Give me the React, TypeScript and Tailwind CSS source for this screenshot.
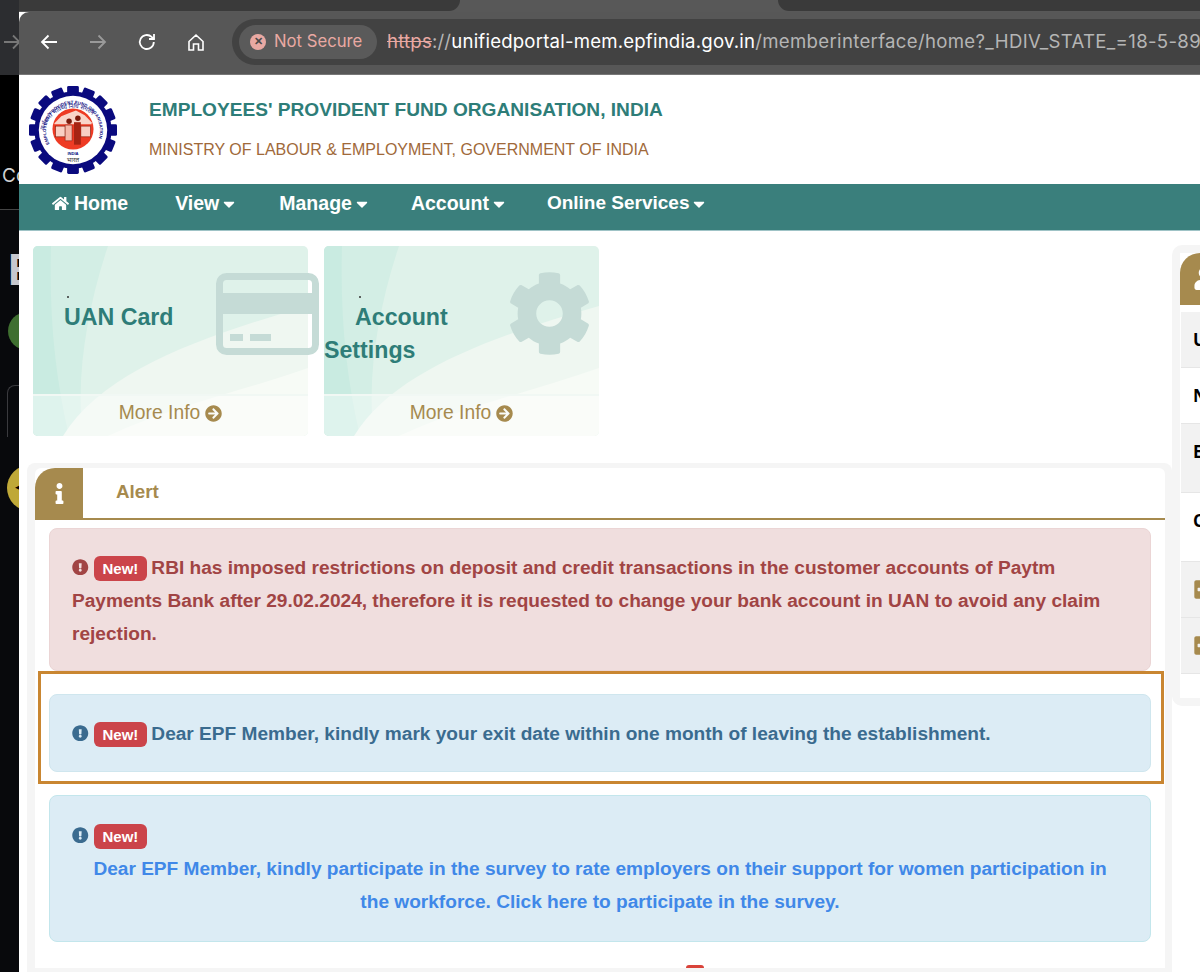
import React from "react";
import { FaHome, FaArrowCircleRight, FaCog, FaInfo, FaExclamationCircle, FaUser, FaMinusSquare, FaCaretDown } from "react-icons/fa";

const sans = "font-['Liberation_Sans',Arial,sans-serif]";

function Logo() {
  const teeth = Array.from({ length: 16 }, (_, i) => (i * 360) / 16);
  return (
    <svg width="88" height="88" viewBox="0 0 90 90" className="shrink-0">
      <defs>
        <path id="ringEn" d="M 21.5 60 A 27.5 27.5 0 1 1 68.5 60" fill="none" />
        <path id="ringHi" d="M 14.5 48 A 31 31 0 0 1 75.5 48" fill="none" />
      </defs>
      {teeth.map((a) => (
        <rect key={a} x="39" y="0" width="12" height="12" rx="1.5" fill="#0a0a7e" transform={`rotate(${a} 45 45)`} />
      ))}
      <circle cx="45" cy="45" r="39.5" fill="#0a0a7e" />
      <circle cx="45" cy="45" r="35" fill="#ffffff" />
      <circle cx="45" cy="44" r="21" fill="#ee3b24" />
      <path d="M26 38 L33 31 L40 28 L48 25 L57 30 L64 37 L64 39 L26 39 Z" fill="#f9d5c9" />
      <rect x="27" y="41" width="10" height="11" fill="#f9cfc3" stroke="#8a2010" strokeWidth="0.7" />
      <rect x="53" y="41" width="10" height="11" fill="#f9cfc3" stroke="#8a2010" strokeWidth="0.7" />
      <circle cx="41" cy="36" r="2.8" fill="#7a1a0c" />
      <circle cx="50" cy="33" r="2.8" fill="#7a1a0c" />
      <path d="M37 40 h7 v16 h-7 Z" fill="#f4b7a8" stroke="#7a1a10" strokeWidth="0.5" />
      <path d="M46 37 h7 v23 h-7 Z" fill="#a62413" />
      <text fontSize="4.4" fontWeight="700" fill="#0a0a7e" fontFamily="'Liberation Sans',sans-serif" letterSpacing="0.1">
        <textPath href="#ringEn" startOffset="1">EMPLOYEES' PROVIDENT FUND ORGANISATION</textPath>
      </text>
      <text fontSize="6" fill="#0a0a7e" fontFamily="'Noto Sans',sans-serif">
        <textPath href="#ringHi" startOffset="3">कर्मचारी भविष्य निधि संगठन</textPath>
      </text>
      <text x="45" y="71" textAnchor="middle" fontSize="4.2" fontWeight="700" fill="#0a0a7e" fontFamily="'Liberation Sans',sans-serif">INDIA</text>
      <text x="45" y="78" textAnchor="middle" fontSize="6.5" fill="#333" fontFamily="'Noto Sans',sans-serif">भारत</text>
    </svg>
  );
}

function CardIcon() {
  return (
    <svg width="103" height="82" viewBox="0 0 103 82" className="absolute left-[183px] top-[27px]">
      <rect x="3.5" y="3.5" width="96" height="75" rx="7" fill="none" stroke="#c5dbd6" strokeWidth="7" />
      <rect x="3" y="20" width="97" height="21" fill="#c5dbd6" />
      <rect x="14" y="61" width="13" height="7" fill="#c5dbd6" />
      <rect x="34" y="61" width="21" height="7" fill="#c5dbd6" />
    </svg>
  );
}

function Tile({ children, icon }: { children: React.ReactNode; icon: React.ReactNode }) {
  return (
    <div className="relative w-[275px] h-[190px] shrink-0">
      <div className="absolute inset-0 rounded-[5px] overflow-hidden bg-[#dff2ea] flex flex-col">
        <svg className="absolute inset-0 w-full h-full" viewBox="0 0 275 190" preserveAspectRatio="none">
          <path d="M0 0 H75 C55 60 42 130 50 190 H0 Z" fill="#d3eee5" />
          <path d="M0 0 H18 C16 70 22 130 36 190 H0 Z" fill="#c9ebe1" />
          <path d="M30 190 C70 125 170 90 275 60 V190 Z" fill="#eff7f1" />
          <path d="M75 190 C140 160 210 145 275 122 V190 Z" fill="#f7fbf6" />
        </svg>
        <div className="relative h-[150px] border-b-2 border-[#f1f8f4]" />
        <div className="relative flex-1 bg-[#ffffff66]" />
      </div>
      {icon}
      <div className="absolute left-0 right-0 top-0 h-[150px]">{children}</div>
      <div className={`absolute left-0 right-0 top-[150px] h-[38px] flex items-center justify-center gap-[5px] text-[#a68a4e] text-[19.3px] pb-[3px] ${sans}`}>
        More Info <FaArrowCircleRight className="text-[17px]" />
      </div>
    </div>
  );
}

function NewBadge() {
  return <span className={`inline-block align-[0px] bg-[#cb444a] text-white text-[15px] font-bold leading-[25px] h-[25px] px-[9px] rounded-[6px] ml-[5px] mr-[4px] ${sans}`}>New!</span>;
}

function Bang() {
  return <FaExclamationCircle className="inline-block text-[16.5px] align-[-1px]" />;
}

function Row({ label, bg, h, icon, tall }: { label?: string; bg: string; h: string; icon?: boolean; tall?: boolean }) {
  return (
    <div className={`${bg} ${h} ${tall ? "pb-[12px]" : ""} flex items-center pl-[12px] border-b border-[#e6e6e6] font-['Open_Sans',sans-serif] font-bold text-[17px] text-black`}>
      {icon ? <FaMinusSquare className="text-[#a68a4e] text-[21px]" /> : label}
    </div>
  );
}

export default function App() {
  return (
    <div className={`relative w-[1200px] h-[972px] overflow-hidden flex bg-[#08090c] ${sans}`}>
      {/* window behind */}
      <div className="w-[19px] shrink-0 flex flex-col text-[#d0d0d0]">
        <div className="h-[75px] bg-[#2c2d30] flex items-center pt-[8px] pl-[3px] overflow-hidden">
          <svg width="16" height="20" viewBox="0 0 16 20" fill="none" stroke="#777777" strokeWidth="1.8" className="shrink-0"><path d="M1 10h15M10 3.5 16.5 10 10 16.5" /></svg>
        </div>
        <div className="h-[135px] bg-black border-b border-[#444] flex items-end pb-[19px] pl-[2px] text-[19px] font-['Inter',sans-serif] whitespace-nowrap overflow-hidden">Co</div>
        <div className="pt-[38px] pl-[8px] text-[44px] leading-[44px] font-bold text-[#c8c8ce] overflow-hidden h-[102px]">E</div>
        <div className="ml-[8px] w-[38px] h-[38px] rounded-full bg-[#3f6f30] shrink-0" />
        <div className="ml-[7px] mt-[35px] h-[52px] rounded-tl-[8px] border-l border-t border-[#3a3a3e]" />
        <div className="ml-[7px] mt-[28px] w-[46px] h-[46px] rounded-full bg-[#bfa838] shrink-0 flex items-center pl-[8px] text-black text-[9px]">◀</div>
      </div>

      <div className="relative w-[1181px] shrink-0 flex flex-col bg-white overflow-hidden">
        {/* Tab strip */}
        <div className="h-[12px] bg-[#585858] flex justify-between shrink-0">
          <div className="w-[441px] h-[11px] bg-[#3a3a3a] rounded-br-[12px]" />
          <div className="w-[422px] h-[11px] bg-[#3a3a3a] rounded-bl-[12px]" />
        </div>
        {/* Toolbar */}
        <div className="h-[63px] bg-[#575757] border-b border-[#777] flex items-center pl-[20px] shrink-0 rounded-tl-[10px] relative">
          <svg width="20" height="20" viewBox="0 0 20 20" fill="none" stroke="#ffffff" strokeWidth="1.8" className="mt-[-3px]"><path d="M18 10H3M9.5 3.5 3 10l6.5 6.5" /></svg>
          <svg width="20" height="20" viewBox="0 0 20 20" fill="none" stroke="#9a9a9a" strokeWidth="1.8" className="ml-[29px] mt-[-3px]"><path d="M2 10h15M10.5 3.5 17 10l-6.5 6.5" /></svg>
          <svg width="20" height="20" viewBox="0 0 20 20" fill="none" stroke="#ffffff" strokeWidth="1.8" className="ml-[29px] mt-[-3px]"><path d="M16.8 10a7 7 0 1 1-2.2-5.1L17 7" /><path d="M17 2v5h-5" /></svg>
          <svg width="20" height="20" viewBox="0 0 20 20" fill="none" stroke="#ffffff" strokeWidth="1.6" className="ml-[29px] mt-[-3px]"><path d="M3 9.5 10 3l7 6.5V18h-4.5v-6h-5v6H3Z" /></svg>
          <div className="ml-[26px] mt-[-3px] flex-1 h-[46px] -mr-[40px] bg-[#424242] rounded-l-[23px] flex items-center pl-[7px] overflow-hidden">
            <div className="h-[34px] w-[138px] shrink-0 rounded-[17px] bg-[#5a5a5a] flex items-center pl-[11px] gap-[8px] text-[#e9a9a3] text-[16.7px] pb-[0px] font-['Inter',sans-serif]">
              <span className="w-[16px] h-[16px] rounded-full bg-[#e9a9a3] flex items-center justify-center text-[#4a4a4a] text-[11px] font-bold leading-none">✕</span>
              <span className="pt-[1px]">Not Secure</span>
            </div>
            <div className="ml-[10px] pt-[1px] whitespace-nowrap text-[18.6px] tracking-[0.2px] font-['Inter',sans-serif] text-[#b5b5b5]">
              <span className="line-through text-[#e9a9a3]">https</span>
              <span>://</span>
              <span className="text-white">unifiedportal-mem.epfindia.gov.in</span>
              <span className="tracking-[0.32px]">/memberinterface/home?_HDIV_STATE_=18-5-89</span>
            </div>
          </div>
        </div>
        {/* Header */}
        <div className="h-[109px] flex items-start pl-[10px] pt-[11px] shrink-0 bg-white">
          <Logo />
          <div className="ml-[32px] pt-[12px]">
            <div className="text-[#2e7d78] font-bold text-[19.13px] leading-[24px] whitespace-nowrap">EMPLOYEES' PROVIDENT FUND ORGANISATION, INDIA</div>
            <div className="mt-[16px] text-[#a0693a] text-[16px] leading-[24px] whitespace-nowrap">MINISTRY OF LABOUR &amp; EMPLOYMENT, GOVERNMENT OF INDIA</div>
          </div>
        </div>
        {/* Nav */}
        <div className="h-[47px] bg-[#3a7f7c] border-b border-[#9fc3c6] flex items-center pl-[33px] text-white font-bold text-[19.5px] shrink-0 pb-[7px]">
          <span className="flex items-center gap-[5px]"><FaHome className="text-[17px]" />Home</span>
          <span className="ml-[47px] flex items-center gap-[1px]">View<FaCaretDown className="text-[18px]" /></span>
          <span className="ml-[41px] flex items-center gap-[1px]">Manage<FaCaretDown className="text-[18px]" /></span>
          <span className="ml-[40px] flex items-center gap-[1px]">Account<FaCaretDown className="text-[18px]" /></span>
          <span className="ml-[39px] flex items-center gap-[1px] text-[19px]">Online Services<FaCaretDown className="text-[18px]" /></span>
        </div>
        {/* Body */}
        <div className="flex flex-1 min-h-0">
          <div className="w-[1153px] shrink-0 flex flex-col">
            <div className="flex gap-[16px] pl-[14px] pt-[15px]">
              <Tile icon={<CardIcon />}>
                <span className="absolute left-[34px] top-[50px] w-[2px] h-[2px] rounded-full bg-[#333]" />
                <div className="absolute left-[31px] top-[55px] text-[#2e7d78] text-[23.2px] font-bold leading-[33px] whitespace-nowrap">UAN Card</div>
              </Tile>
              <Tile icon={<FaCog className="absolute left-[183px] top-[25px] text-[#c5dbd6] text-[85px]" />}>
                <span className="absolute left-[35px] top-[50px] w-[2px] h-[2px] rounded-full bg-[#333]" />
                <div className="absolute left-0 top-[55px] w-[150px] text-[#2e7d78] text-[23.2px] font-bold leading-[33px] indent-[31px]">Account Settings</div>
              </Tile>
            </div>
            {/* Alert panel */}
            <div className="ml-[8px] mt-[27px] w-[1145px] flex-1 bg-[#f5f5f5] rounded-t-[8px] pt-[5px] pl-[8px] pr-[7px]">
              <div className="bg-white h-[500px] rounded-t-[6px] flex flex-col">
                <div className="h-[52px] shrink-0 border-b-2 border-[#a68a4e] flex items-center">
                  <div className="w-[48px] h-[51px] bg-[#a68a4e] rounded-tl-[20px] flex items-center justify-center text-white text-[21px]"><FaInfo /></div>
                  <div className="ml-[33px] text-[#a68a4e] font-bold text-[18.8px] mb-[2px]">Alert</div>
                </div>
                <div className="px-[14px] pt-[8px] text-[19.1px] leading-[33px] font-bold flex flex-col">
                  <div className="h-[143px] rounded-[8px] bg-[#f0dede] border border-[#ebd5d5] text-[#a14444] pt-[22px] pl-[22px] pr-[40px]">
                    <Bang />
                    <NewBadge />RBI has imposed restrictions on deposit and credit transactions in the customer accounts of Paytm Payments Bank after 29.02.2024, therefore it is requested to change your bank account in UAN to avoid any claim rejection.
                  </div>
                  <div className="mt-[23px] h-[78px] rounded-[8px] bg-[#dcecf5] border border-[#cfe6ee] text-[#3a6b8f] pt-[22px] pl-[22px]">
                    <Bang />
                    <NewBadge />Dear EPF Member, kindly mark your exit date within one month of leaving the establishment.
                  </div>
                  <div className="mt-[23px] h-[147px] rounded-[8px] bg-[#dcecf5] border border-[#c3e6ec] pt-[23px] pl-[22px] pr-[22px]">
                    <div className="text-[#3a6b8f] h-[33px]">
                      <Bang />
                      <NewBadge />
                    </div>
                    <div className="text-center text-[#4088e8] px-[20px]">Dear EPF Member, kindly participate in the survey to rate employers on their support for women participation in the workforce. Click here to participate in the survey.</div>
                  </div>
                </div>
                <div className="relative mt-auto h-[2px]">
                  <span className="absolute left-[651px] -top-[1px] w-[18px] h-[3px] bg-[#d9433a] rounded-t-[3px]" />
                </div>
              </div>
            </div>
          </div>
          {/* Right panel */}
          <div className="mt-[14px] w-[320px] shrink-0 h-[461px] bg-[#f5f5f5] rounded-[10px] px-[8px] pt-[8px]">
            <div className="bg-white h-[445px] flex flex-col">
              <div className="h-[52px] shrink-0 border-b border-[#a68a4e]">
                <div className="w-[48px] h-[51px] bg-[#a68a4e] rounded-tl-[20px] flex items-center justify-center text-white text-[23px]"><FaUser /></div>
              </div>
              <div className="ml-[1px] mt-[7px] flex flex-col">
                <Row label="UAN" bg="bg-[#f2f2f2]" h="h-[56px]" />
                <Row label="Name" bg="bg-white" h="h-[56px]" />
                <Row label="EPF" bg="bg-[#f2f2f2]" h="h-[69px]" tall />
                <Row label="Contact" bg="bg-white" h="h-[69px]" tall />
                <Row icon bg="bg-[#f2f2f2]" h="h-[56px]" />
                <Row icon bg="bg-[#f2f2f2]" h="h-[56px]" />
              </div>
            </div>
          </div>
        </div>
        {/* Highlight annotation */}
        <div className="absolute left-[19px] top-[671px] w-[1126px] h-[113px] border-[3px] border-[#c98631] pointer-events-none" />
      </div>
    </div>
  );
}
